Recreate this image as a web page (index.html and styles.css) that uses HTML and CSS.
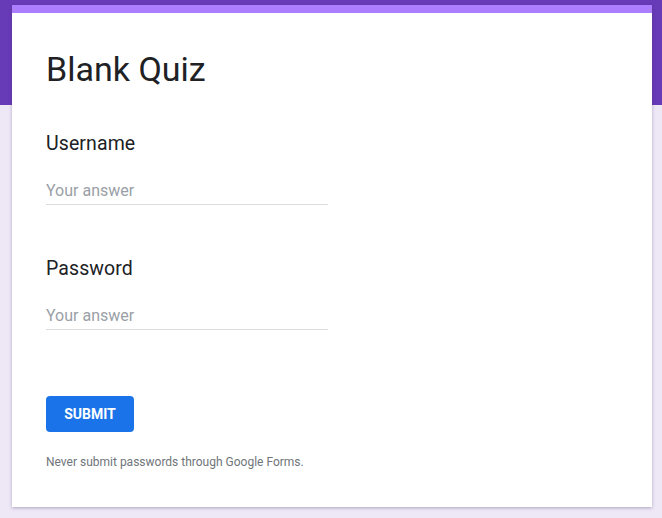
FILE: index.html
```html
<!DOCTYPE html>
<html lang="en">
<head>
<meta charset="utf-8">
<title>Blank Quiz</title>
<link rel="stylesheet" href="styles.css">
</head>
<body>
<main class="card">
  <h1 class="title">Blank Quiz</h1>
  <div class="question">
    <label class="label" for="u">Username</label>
    <input class="answer" id="u" type="text" placeholder="Your answer">
  </div>
  <div class="question">
    <label class="label" for="p">Password</label>
    <input class="answer" id="p" type="text" placeholder="Your answer">
  </div>
  <button class="submit" type="button">SUBMIT</button>
  <p class="note">Never submit passwords through Google Forms.</p>
</main>
</body>
</html>
```
FILE: styles.css
```css
html, body {
  margin: 0;
  padding: 0;
}
body {
  font-family: Roboto, "Liberation Sans", sans-serif;
  background: linear-gradient(to bottom, #673ab7 0, #673ab7 105px, #ede7f6 105px, #ede7f6 100%);
  min-height: 518px;
  padding-top: 5px;
  box-sizing: border-box;
}
.card {
  width: 640px;
  margin: 0 0 0 12px;
  box-sizing: border-box;
  background: #fff;
  border-top: 8px solid #ab7dff;
  box-shadow: 0 1px 3px rgba(60, 40, 90, 0.35);
  padding: 36px 34px 37px;
  display: flex;
  flex-direction: column;
  align-items: flex-start;
}
.title {
  margin: 0;
  font-size: 34px;
  line-height: 40px;
  font-weight: 400;
  color: #202124;
}
.question {
  display: flex;
  flex-direction: column;
  margin-top: 43px;
}
.question + .question {
  margin-top: 52px;
}
.label {
  font-size: 19.5px;
  letter-spacing: 0.1px;
  line-height: 24px;
  height: 24px;
  color: #202124;
}
.answer {
  margin-top: 22px;
  width: 282px;
  box-sizing: border-box;
  border: 0;
  border-bottom: 1px solid #dadce0;
  padding: 0 0 2px;
  font-family: inherit;
  font-size: 16px;
  line-height: 24px;
  height: 27px;
  color: #202124;
  outline: none;
  background: transparent;
}
.answer::placeholder {
  color: #9aa0a6;
}
.submit {
  margin-top: 66px;
  width: 88px;
  height: 36px;
  border: 0;
  border-radius: 4px;
  background: #1a73e8;
  color: #fff;
  font-family: inherit;
  font-size: 14px;
  font-weight: 700;
  padding: 0;
}
.note {
  margin: 22px 0 0;
  font-size: 12px;
  line-height: 16px;
  color: #70757a;
}
```
